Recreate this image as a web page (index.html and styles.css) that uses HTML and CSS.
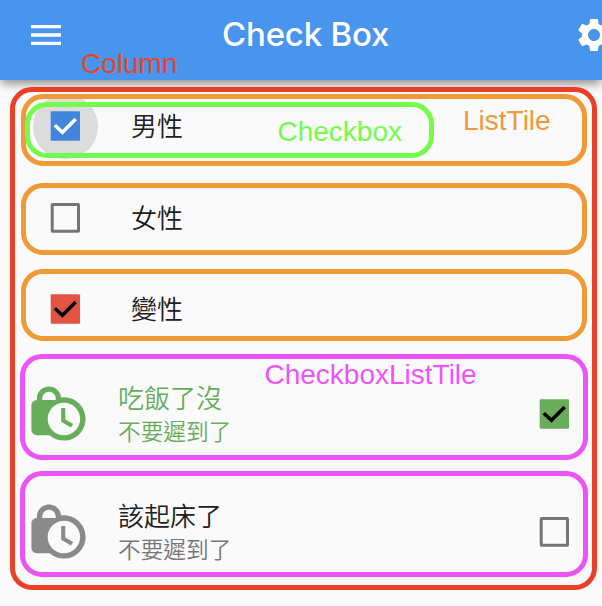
FILE: index.html
```html
<!DOCTYPE html>
<html lang="zh-Hant">
<head>
<meta charset="utf-8">
<title>Check Box</title>
<link rel="stylesheet" href="styles.css">
</head>
<body>
<svg class="defs" width="0" height="0" aria-hidden="true">
  <symbol id="lock-clock" viewBox="0 0 24 24"><path fill-rule="evenodd" d="M14.5 14.2l2.9 1.7-.8 1.3L13 15v-5h1.5v4.200zM22 14c0 4.410-3.590 8-8 8-2.020 0-3.860-.76-5.270-2H4c-1.150 0-2-.85-2-2V9c0-1.120.89-1.960 2-2v-.5C4 4.010 6.010 2 8.500 2c2.340 0 4.240 1.790 4.460 4.080.34-.05.69-.08 1.040-.08 4.410 0 8 3.590 8 8zM6 7h5v-.5C11 5.120 9.880 4 8.500 4S6 5.120 6 6.500V7zm14 7c0-3.310-2.690-6-6-6s-6 2.690-6 6 2.690 6 6 6 6-2.690 6-6z"/></symbol>
  <symbol id="checked" viewBox="0 0 30 30"><rect x=".7" y=".3" width="29.300" height="29.500" rx="1"/><path class="tick" d="M4.800 14.200l7.600 7L25.700 7.900"/></symbol>
  <symbol id="unchecked" viewBox="0 0 30 30"><rect class="empty" x="2.200" y="1.600" width="26.300" height="26.600" rx=".3"/></symbol>
</svg>

<header class="appbar">
  <svg class="menu" viewBox="0 0 24 24"><path d="M3 18h18v-2H3v2zm0-5h18v-2H3v2zm0-7v2h18V6H3z"/></svg>
  <h1 class="title">Check Box</h1>
  <svg class="gear" viewBox="0 0 24 24"><path d="M19.140 12.940c.04-.3.06-.61.06-.94 0-.32-.02-.64-.07-.94l2.030-1.580c.18-.14.23-.41.12-.61l-1.920-3.320c-.12-.22-.37-.29-.59-.22l-2.390.96c-.5-.38-1.030-.7-1.620-.94l-.36-2.540c-.04-.24-.24-.41-.48-.41h-3.840c-.24 0-.43.17-.47.41l-.36 2.540c-.59.24-1.130.57-1.620.94l-2.390-.96c-.22-.08-.47 0-.59.22L2.740 8.870c-.12.21-.08.47.12.61l2.030 1.580c-.05.3-.09.63-.09.94s.02.64.07.94l-2.030 1.580c-.18.14-.23.41-.12.61l1.920 3.320c.12.22.37.29.59.22l2.390-.96c.5.38 1.030.7 1.620.94l.36 2.540c.05.24.24.41.48.41h3.840c.24 0 .44-.17.47-.41l.36-2.540c.59-.24 1.130-.56 1.620-.94l2.390.96c.22.08.47 0 .59-.22l1.920-3.320c.12-.22.07-.47-.12-.61l-2.010-1.580zM12 15.600c-1.980 0-3.600-1.620-3.600-3.600s1.620-3.600 3.600-3.600 3.600 1.620 3.600 3.600-1.620 3.600-3.600 3.600z"/></svg>
  <span class="note note-column">Column</span>
</header>

<main class="column">
  <section class="tile tile-first">
    <span class="ripple"></span>
    <svg class="box blue"><use href="#checked"/></svg>
    <span class="label">男性</span>
    <span class="outline"></span>
    <span class="note note-checkbox">Checkbox</span>
    <span class="note note-listtile">ListTile</span>
  </section>
  <section class="tile tile-second">
    <svg class="box"><use href="#unchecked"/></svg>
    <span class="label">女性</span>
  </section>
  <section class="tile tile-third">
    <svg class="box red"><use href="#checked"/></svg>
    <span class="label">變性</span>
  </section>
  <section class="check-tile active">
    <svg class="lock"><use href="#lock-clock"/></svg>
    <div class="text">
      <div class="name">吃飯了沒</div>
      <div class="sub">不要遲到了</div>
    </div>
    <svg class="box green"><use href="#checked"/></svg>
    <span class="note note-checktile">CheckboxListTile</span>
  </section>
  <section class="check-tile">
    <svg class="lock"><use href="#lock-clock"/></svg>
    <div class="text">
      <div class="name">該起床了</div>
      <div class="sub">不要遲到了</div>
    </div>
    <svg class="box"><use href="#unchecked"/></svg>
  </section>
</main>
</body>
</html>
```
FILE: styles.css
```css
* { box-sizing: border-box; }

body {
  margin: 0;
  height: 606px;
  overflow: hidden;
  background: #fafafa;
  font-family: "Noto Sans CJK TC", sans-serif;
  color: #202020;
}

svg { display: block; flex: none; }
.defs { position: absolute; }

.appbar {
  position: relative;
  display: flex;
  align-items: center;
  height: 80px;
  padding: 0 0 11px 26px;
  background: #4994ec;
  box-shadow: 0 5px 9px -1px rgba(0, 0, 0, .42);
}
.appbar svg { fill: #fff; }
.menu { width: 40px; height: 40px; }
.title {
  width: 167px;
  margin: -2px 0 0 156px;
  font: 500 33px/40px Inter, sans-serif;
  letter-spacing: -.2px;
  color: #fff;
  white-space: nowrap;
}
.gear { width: 40px; height: 40px; margin-left: 184.500px; }

.note {
  position: absolute;
  font: 28px/32px "Liberation Sans", sans-serif;
  white-space: nowrap;
}
.note-column { left: 81px; top: 48px; color: #eb4228; }

.column {
  position: relative;
  isolation: isolate;
  width: 587px;
  height: 503px;
  margin: 7px 0 0 10px;
  padding: 2px 5px 8px 6px;
  border: 5px solid #eb4026;
  border-radius: 22px;
}

.tile, .check-tile {
  position: relative;
  display: flex;
  border: 5px solid #f09937;
  border-radius: 22px;
}
.tile { height: 72px; padding-left: 24px; }
.tile-first { padding-top: 12px; }
.tile-second { margin-top: 17px; padding-top: 15px; }
.tile-third { margin-top: 14px; padding-top: 20px; }

.box { width: 30px; height: 30px; fill: #4285dc; }
.box.red { fill: #e25341; }
.box.green { fill: #67ad5b; }
.tick { fill: none; stroke: #000; stroke-width: 3.500px; }
.blue { --tick: #fff; }
.tick { stroke: var(--tick, #000); }
.empty { fill: none; stroke: #757575; stroke-width: 3px; }

.label {
  margin: -1px 0 0 51px;
  font-size: 26px;
  font-weight: 350;
  line-height: 30px;
}

.ripple {
  position: absolute;
  z-index: -1;
  left: 7px;
  top: -5px;
  width: 65px;
  height: 65px;
  border-radius: 50%;
  background: #dcdcdc;
}
.outline {
  position: absolute;
  left: -1px;
  top: 3px;
  width: 409px;
  height: 56px;
  border: 5px solid #75fb4c;
  border-radius: 22px;
}
.note-checkbox { left: 251.500px; top: 17px; color: #75fb4c; }
.note-listtile { left: 437px; top: 6px; color: #f09937; }

.check-tile {
  height: 106px;
  margin: 13px -1px 0;
  padding: 22px 14px 0 1px;
  border-color: #ed54f8;
}
.check-tile + .check-tile { margin-top: 11px; padding-top: 23px; }
.lock { width: 65px; height: 65px; fill: #8a8a8a; }
.text { flex: 1; margin: -1px 0 0 27px; font-weight: 350; white-space: nowrap; }
.name { font-size: 26px; line-height: 34px; }
.sub { font-size: 22.700px; line-height: 34px; color: #777; }
.check-tile .box { margin-top: 18px; }
.active .lock { fill: #67ad5b; }
.active .text, .active .sub { color: #67ad5b; }
.note-checktile { left: 239.500px; top: 0; color: #ed54f8; }
```
